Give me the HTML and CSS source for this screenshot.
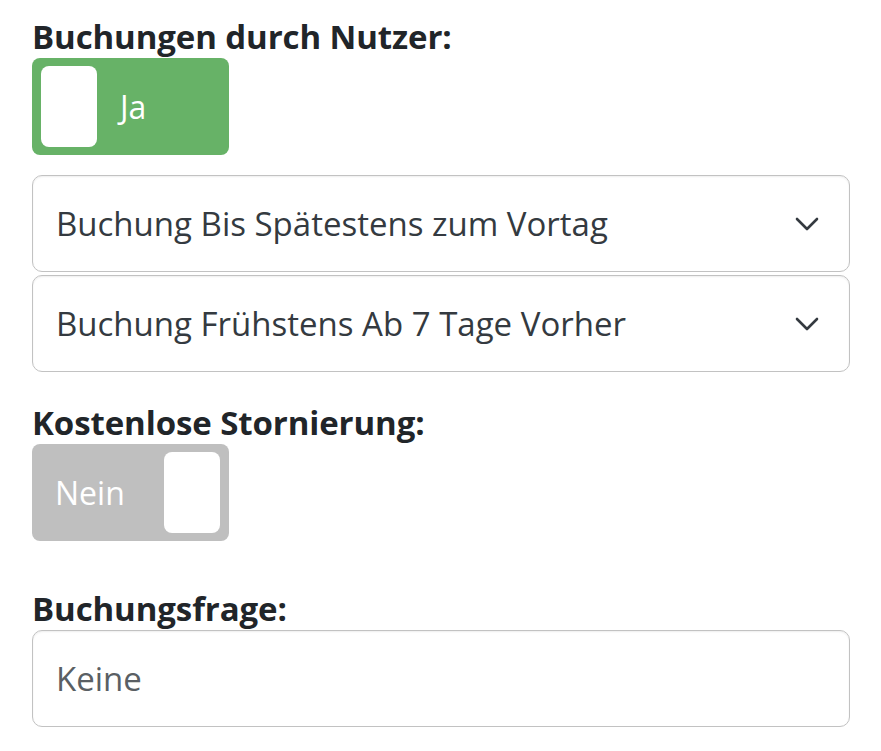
FILE: index.html
```html
<!DOCTYPE html>
<html lang="de">
<head>
<meta charset="utf-8">
<title>Buchungen</title>
<link rel="stylesheet" href="styles.css">
</head>
<body>
<div class="form">
  <div class="group">
    <div class="label">Buchungen durch Nutzer:</div>
    <div class="toggle on"><span class="knob"></span><span class="toggle-text">Ja</span></div>
  </div>
  <div class="selects">
    <div class="select"><span class="select-text">Buchung Bis Spätestens zum Vortag</span>
      <svg class="chev" viewBox="0 0 24 14" width="24" height="14"><path d="M2 2 L12 12 L22 2" fill="none" stroke="#343a40" stroke-width="2.6" stroke-linecap="round" stroke-linejoin="round"/></svg>
    </div>
    <div class="select"><span class="select-text">Buchung Frühstens Ab 7 Tage Vorher</span>
      <svg class="chev" viewBox="0 0 24 14" width="24" height="14"><path d="M2 2 L12 12 L22 2" fill="none" stroke="#343a40" stroke-width="2.6" stroke-linecap="round" stroke-linejoin="round"/></svg>
    </div>
  </div>
  <div class="group storn">
    <div class="label">Kostenlose Stornierung:</div>
    <div class="toggle off"><span class="toggle-text">Nein</span><span class="knob"></span></div>
  </div>
  <div class="group frage">
    <div class="label">Buchungsfrage:</div>
    <div class="input"><span class="placeholder">Keine</span></div>
  </div>
</div>
</body>
</html>
```
FILE: styles.css
```css
html, body { margin: 0; padding: 0; background: #fff; }
body { font-family: "Open Sans", "Noto Sans", sans-serif; color: #212529; }
.form { padding: 16px 31px 0 32px; width: 818px; }
.label { font-weight: 700; font-size: 33px; line-height: 42px; color: #212529; letter-spacing: -0.1px; }
.toggle { width: 197px; height: 97px; border-radius: 8px; display: flex; align-items: center; box-sizing: border-box; padding: 8px 9px; }
.toggle.on { background: #67b267; }
.toggle.off { background: #bfbfbf; justify-content: space-between; }
.knob { width: 56px; height: 81px; background: #fff; border-radius: 8px; flex: none; }
.toggle-text { color: #fff; font-size: 32px; }
.toggle.on .toggle-text { margin-left: 23px; }
.toggle.off .toggle-text { margin-left: 14px; }
.selects { margin-top: 20px; display: flex; flex-direction: column; gap: 3px; }
.select, .input { height: 97px; border: 1px solid #c2c2c2; border-radius: 10px; box-sizing: border-box; display: flex; align-items: center; padding: 0 30px 0 23px; box-shadow: inset 0 1px 2px rgba(0,0,0,0.07); background: #fff; }
.select { justify-content: space-between; }
.select-text { font-size: 33px; color: #343a40; }
.storn { margin-top: 30px; }
.frage { margin-top: 47px; }
.placeholder { font-size: 33px; color: #5a5f64; }
```
